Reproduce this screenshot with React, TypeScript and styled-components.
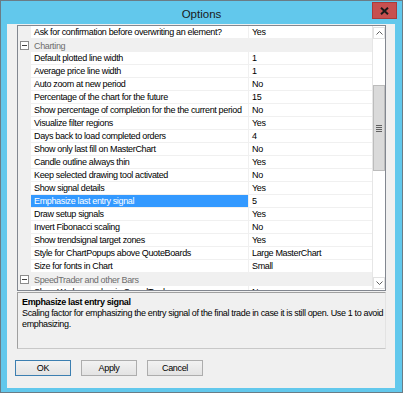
import React from "react";
import styled, { createGlobalStyle } from "styled-components";

const Global = createGlobalStyle`
  html, body { margin: 0; padding: 0; background: #ffffff; }
  body { font-family: "Liberation Sans", Arial, sans-serif; }
  * { box-sizing: border-box; }
`;

const Window = styled.div`
  width: 403px;
  height: 393px;
  border: 1px solid #6a7c86;
  background: #62c8ec;
  display: flex;
  flex-direction: column;
`;

const TitleBar = styled.div`
  height: 23px;
  display: grid;
  grid-template-columns: 1fr auto 1fr;
  align-items: start;
`;

const Title = styled.div`
  grid-column: 2;
  font-family: "Liberation Sans", Arial, sans-serif;
  font-size: 11.5px;
  line-height: 14px;
  color: #1a1a1a;
  padding-top: 6px;
`;

const CloseButton = styled.div`
  grid-column: 3;
  justify-self: end;
  margin-top: 1px;
  margin-right: 5px;
  width: 25px;
  height: 17px;
  background: #c75050;
  border: 1px solid #a93c3c;
  display: flex;
  align-items: center;
  justify-content: center;
`;

const Client = styled.div`
  flex: 1;
  margin: 0 7px 4px 6px;
  background: #f0f0f0;
  display: flex;
  flex-direction: column;
  padding-top: 1px;
  font-size: 9px;
  letter-spacing: -0.35px;
`;

const Grid = styled.div`
  margin: 0 9px 0 10px;
  height: 266px;
  border: 1px solid #828790;
  background: #ffffff;
  display: flex;
`;

const Rows = styled.div`
  flex: 1;
  overflow: hidden;
  display: flex;
  flex-direction: column;
`;

const Row = styled.div`
  height: 13px;
  flex: none;
  display: flex;
  line-height: 12px;
  color: #000;
`;

const Gutter = styled.div`
  width: 13px;
  flex: none;
  background: #f0f0f0;
`;

const Label = styled.div<{ $selected?: boolean }>`
  width: 218px;
  flex: none;
  padding-left: 3px;
  white-space: nowrap;
  overflow: hidden;
  border-right: 1px solid #f0f0f0;
  border-bottom: 1px solid #f0f0f0;
  background: ${(p) => (p.$selected ? "#3399ff" : "#ffffff")};
  color: ${(p) => (p.$selected ? "#ffffff" : "#000000")};
`;

const Value = styled.div`
  flex: 1;
  padding-left: 3px;
  white-space: nowrap;
  overflow: hidden;
  border-bottom: 1px solid #f0f0f0;
`;

const CategoryRow = styled.div`
  height: 13px;
  flex: none;
  display: flex;
  align-items: center;
  background: #f0f0f0;
  line-height: 12px;
  color: #6d6d6d;
`;

const ExpandBox = styled.div`
  width: 13px;
  flex: none;
  display: flex;
  align-items: center;
  justify-content: center;
`;

const CategoryText = styled.div`
  padding-left: 3px;
  white-space: nowrap;
`;

const ScrollBar = styled.div`
  width: 13px;
  flex: none;
  background: #ffffff;
  border-left: 1px solid #e6e6e6;
  display: flex;
  flex-direction: column;
  padding: 1px 0;
`;

const ArrowButton = styled.div`
  height: 12px;
  flex: none;
  display: flex;
  align-items: center;
  justify-content: center;
  background: #ffffff;
  border: 1px solid #e2e2e2;
`;

const Track = styled.div<{ $grow?: number }>`
  flex: ${(p) => p.$grow ?? 1};
`;

const Thumb = styled.div`
  height: 86px;
  flex: none;
  background: #dadada;
  border: 1px solid #bcbcbc;
  display: flex;
  align-items: center;
  justify-content: center;
`;

const Description = styled.div`
  margin: 1px 9px 0 10px;
  height: 57px;
  border: 1px solid #a0a0a0;
  border-right-color: #e3e3e3;
  border-bottom-color: #c8c8c8;
  background: #f0f0f0;
  padding: 3px 4px 0 4px;
  color: #000;
`;

const DescTitle = styled.div`
  font-weight: bold;
  line-height: 12px;
`;

const DescLine = styled.div`
  line-height: 11px;
  white-space: nowrap;
  &:first-of-type {
    margin-top: 1px;
  }
`;

const ButtonRow = styled.div`
  margin: 11px 0 0 8px;
  display: flex;
  gap: 10px;
`;

const Button = styled.div<{ $default?: boolean }>`
  width: 56px;
  height: 16px;
  border: 1px solid ${(p) => (p.$default ? "#3c7fb1" : "#adadad")};
  background: linear-gradient(#f2f2f2, #e3e3e3);
  line-height: 14px;
  text-align: center;
  color: #000;
`;

type Item =
  | { kind: "row"; label: string; value: string; selected?: boolean }
  | { kind: "cat"; label: string };

const items: Item[] = [
  { kind: "row", label: "Ask for confirmation before overwriting an element?", value: "Yes" },
  { kind: "cat", label: "Charting" },
  { kind: "row", label: "Default plotted line width", value: "1" },
  { kind: "row", label: "Average price line width", value: "1" },
  { kind: "row", label: "Auto zoom at new period", value: "No" },
  { kind: "row", label: "Percentage of the chart for the future", value: "15" },
  { kind: "row", label: "Show percentage of completion for the the current period", value: "No" },
  { kind: "row", label: "Visualize filter regions", value: "Yes" },
  { kind: "row", label: "Days back to load completed orders", value: "4" },
  { kind: "row", label: "Show only last fill on MasterChart", value: "No" },
  { kind: "row", label: "Candle outline always thin", value: "Yes" },
  { kind: "row", label: "Keep selected drawing tool activated", value: "No" },
  { kind: "row", label: "Show signal details", value: "Yes" },
  { kind: "row", label: "Emphasize last entry signal", value: "5", selected: true },
  { kind: "row", label: "Draw setup signals", value: "Yes" },
  { kind: "row", label: "Invert Fibonacci scaling", value: "No" },
  { kind: "row", label: "Show trendsignal target zones", value: "Yes" },
  { kind: "row", label: "Style for ChartPopups above QuoteBoards", value: "Large MasterChart" },
  { kind: "row", label: "Size for fonts in Chart", value: "Small" },
  { kind: "cat", label: "SpeedTrader and other Bars" },
  { kind: "row", label: "Show Workspace bar in SpeedTrader", value: "No" },
];

const MinusBox = () => (
  <svg width="9" height="9" viewBox="0 0 9 9">
    <rect x="0.5" y="0.5" width="8" height="8" fill="#ffffff" stroke="#8c8c8c" />
    <line x1="2" y1="4.5" x2="7" y2="4.5" stroke="#404040" />
  </svg>
);

const Chevron = ({ up }: { up?: boolean }) => (
  <svg width="7" height="4" viewBox="0 0 7 4">
    <polyline
      points={up ? "0.5,3.5 3.5,0.5 6.5,3.5" : "0.5,0.5 3.5,3.5 6.5,0.5"}
      fill="none"
      stroke="#606060"
      strokeWidth="1"
    />
  </svg>
);

const Gripper = () => (
  <svg width="6" height="7" viewBox="0 0 6 7">
    <rect x="0" y="0" width="6" height="1" fill="#606060" />
    <rect x="0" y="2" width="6" height="1" fill="#606060" />
    <rect x="0" y="4" width="6" height="1" fill="#606060" />
    <rect x="0" y="6" width="6" height="1" fill="#606060" />
  </svg>
);

const CloseGlyph = () => (
  <svg width="9" height="8" viewBox="0 0 9 8">
    <path d="M1 0.8 L8 7.2 M8 0.8 L1 7.2" stroke="#1a1a1a" strokeWidth="2" />
  </svg>
);

export default function App() {
  return (
    <>
      <Global />
      <Window>
        <TitleBar>
          <Title>Options</Title>
          <CloseButton>
            <CloseGlyph />
          </CloseButton>
        </TitleBar>
        <Client>
          <Grid>
            <Rows>
              {items.map((it, i) =>
                it.kind === "cat" ? (
                  <CategoryRow key={i}>
                    <ExpandBox>
                      <MinusBox />
                    </ExpandBox>
                    <CategoryText>{it.label}</CategoryText>
                  </CategoryRow>
                ) : (
                  <Row key={i}>
                    <Gutter />
                    <Label $selected={it.selected}>{it.label}</Label>
                    <Value>{it.value}</Value>
                  </Row>
                )
              )}
            </Rows>
            <ScrollBar>
              <ArrowButton>
                <Chevron up />
              </ArrowButton>
              <Track $grow={46} />
              <Thumb>
                <Gripper />
              </Thumb>
              <Track $grow={106} />
              <ArrowButton>
                <Chevron />
              </ArrowButton>
            </ScrollBar>
          </Grid>
          <Description>
            <DescTitle>Emphasize last entry signal</DescTitle>
            <DescLine>
              Scaling factor for emphasizing the entry signal of the final trade in case it is still open. Use 1 to avoid
            </DescLine>
            <DescLine>emphasizing.</DescLine>
          </Description>
          <ButtonRow>
            <Button $default>OK</Button>
            <Button>Apply</Button>
            <Button>Cancel</Button>
          </ButtonRow>
        </Client>
      </Window>
    </>
  );
}
